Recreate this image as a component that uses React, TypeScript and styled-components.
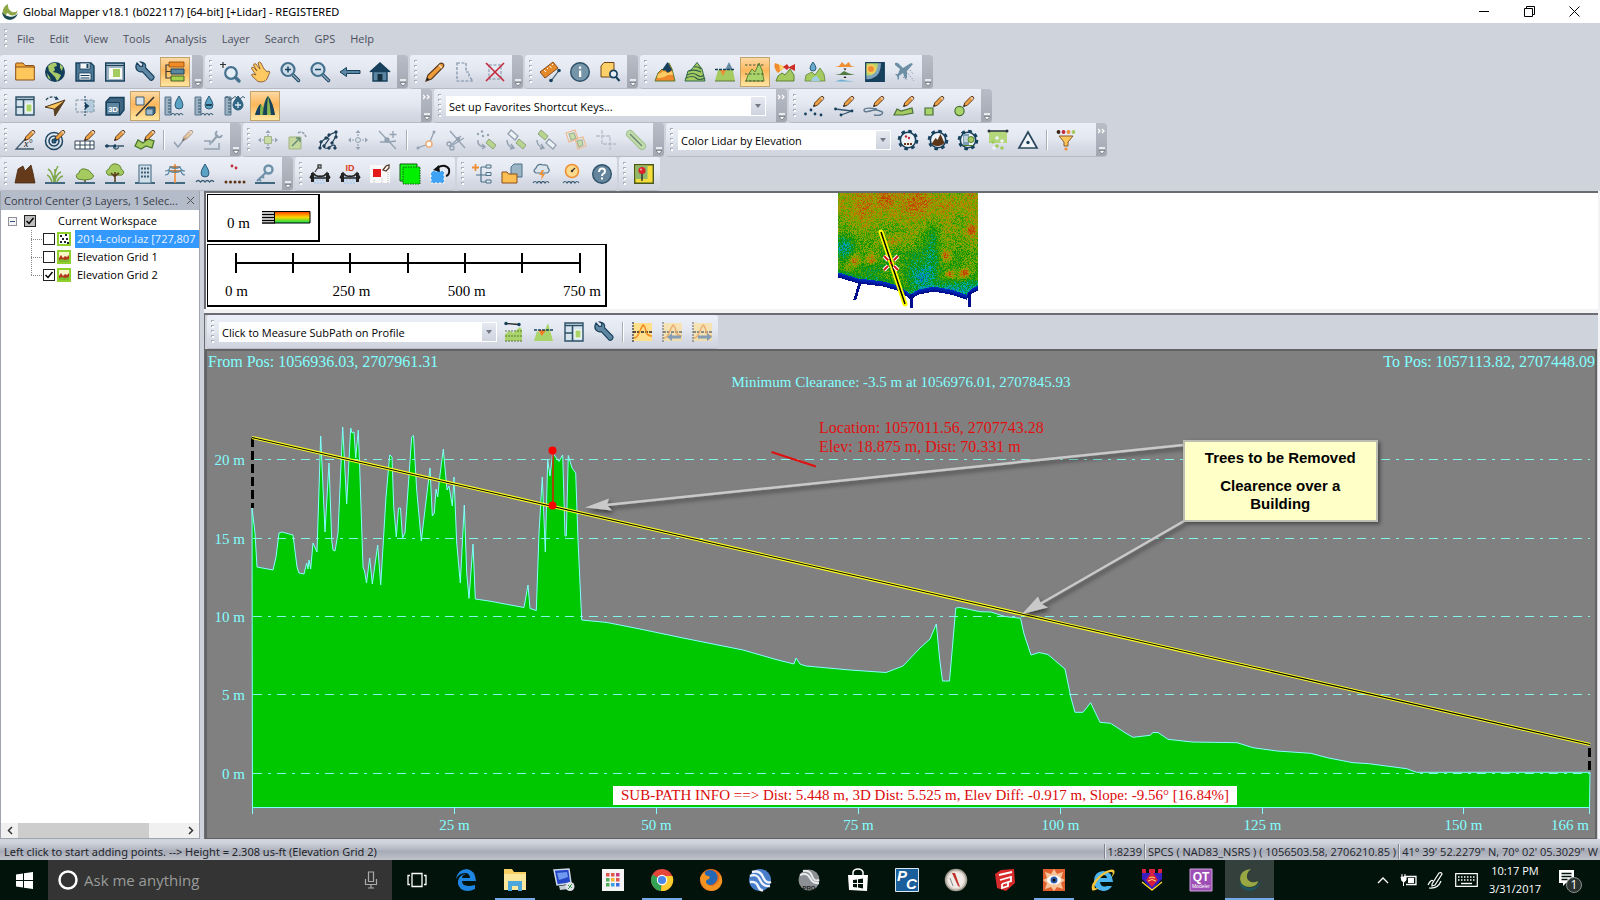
import React, { ReactNode, useEffect, useRef } from "react";
import styled, { createGlobalStyle, css } from "styled-components";

const UI = '"Open Sans", "Noto Sans", sans-serif';
const UI_WIDE = '"Noto Sans", "Open Sans", sans-serif';
const SERIF = '"Liberation Serif", serif';

const NAVY = "#16405c";
const ORANGE = "#ef8f35";
const GREEN = "#a5ca5f";
const LIME = "#a9d46a";
const FADED = "#93a1b0";

const GlobalStyle = createGlobalStyle`
  *, *::before, *::after { box-sizing: border-box; }
  body { margin: 0; background: #cfd3dc; font-family: ${UI}; font-size: 11px; color: #111; }
  button, select, input { font: inherit; color: inherit; }
`;

/* ---------- icon drawings, on a 20 x 20 grid ---------- */

const Pencil = ({ faded }: { faded?: boolean }) => (
  <g opacity={faded ? 0.45 : 1}>
    <path d="M9.5 10.5L10.8 6.8L16.5 1Q18-.4 19.3.9Q20.5 2.2 19.1 3.5L13.3 9.3Z" fill="#efa040" stroke="#5a3a20" strokeWidth="1" />
    <path d="M9.5 10.5l.6-1.9 1.4 1.3z" fill="#222" />
    <path d="M17 1.2l2 2" stroke="#e9d3c4" strokeWidth="1.6" />
  </g>
);

const Gear = ({ children }: { children: ReactNode }) => (
  <g>
    <circle cx="10" cy="10" r="9" fill="none" stroke={NAVY} strokeWidth="2.6" strokeDasharray="3.6 3.468" />
    <circle cx="10" cy="10" r="7.7" fill="#eef1f6" stroke={NAVY} strokeWidth="1.6" />
    {children}
  </g>
);

const Wrench = (
  <path
    d="M2 1l3.2 3.4 2.3-.3.4-2.5L5.6 0C9 0 11.5 2.4 10.7 6l8 8.2c1.5 1.8-1.8 5-3.7 3.7l-7.7-8.3C4 10.7.2 8 1 3.5z"
    fill="#5f87a3" stroke={NAVY} strokeWidth="1.2"
  />
);

const Ruler = (
  <g>
    <path d="M0 1h6v18H0z" fill="#9bb1c1" stroke="#54758c" strokeWidth="1" />
    <path d="M3 4h3M3 7h3M3 10h3M3 13h3M3 16h3" stroke="#2f546c" strokeWidth="1" />
  </g>
);

const Waves = ({ x = 4 }: { x?: number }) => (
  <path d={`M${x} 19q2-3 4 0q2-3 4 0q2-3 4 0`} fill="none" stroke="#3a5d74" strokeWidth="1.2" />
);

const Baseline = <path d="M0 19h20" stroke="#315c74" strokeWidth="1.8" />;

const FourArrows = ({ children }: { children?: ReactNode }) => (
  <g stroke={FADED} fill={FADED}>
    <path d="M10 1v5M10 14v5M1 10h5M14 10h5" strokeWidth="1.2" strokeDasharray="2 1" />
    <path d="M10 0l2.5 3h-5zM10 20l2.500-3h-5zM0 10l3-2.5v5zM20 10l-3-2.5v5z" stroke="none" />
    {children}
  </g>
);

const bridge = (
  <g>
    <path d="M4 13h12M3 16h14M4 19h12" stroke="#a9cdf0" strokeWidth="1.6" strokeDasharray="2 1" />
    <path d="M1 9h3v9H1zM16 9h3v9h-3z" fill="#222" />
    <path d="M0 14l3-5q3 4 7 3 4 1 7-3l3 5M0 14h20" fill="none" stroke="#222" strokeWidth="1.6" />
  </g>
);

const profileTile = (
  <g>
    <path d="M1 1h19v18H1z" fill="#ffdf8c" />
    <path d="M1 0v20" stroke="#333" strokeWidth="1.2" strokeDasharray="2 1" />
    <path d="M1 10h19" stroke="#222" strokeWidth="1.4" strokeDasharray="3 1" />
    <path d="M2 16q3 0 5-5t4-8q2 1 3 6t6 5" fill="none" stroke="#f28a1c" strokeWidth="1.4" />
  </g>
);

const magnifier = (
  <g>
    <path d="M12 12l6.5 6.5" stroke={NAVY} strokeWidth="3.4" strokeLinecap="round" />
    <path d="M12.5 12.5l6 6" stroke="#8ca9bd" strokeWidth="1.6" strokeLinecap="round" />
    <circle cx="8" cy="7.5" r="6.5" fill="#cfdeea" stroke="#46728f" strokeWidth="2.2" />
    <path d="M5 7.5h6" stroke={NAVY} strokeWidth="1.5" />
  </g>
);

const icons: Record<string, ReactNode> = {
  folder: (
    <g>
      <path d="M.7 6V1.600Q.7 1 2 1h6l2 2.500h8.500q.8 0 .8 1V6z" fill="#f4a93c" stroke="#8a4e16" />
      <path d="M.7 5h18.600v13H.7z" fill="#fdc75c" stroke="#8a4e16" />
    </g>
  ),
  globe: (
    <g>
      <circle cx="10" cy="10" r="10" fill="#123e5b" />
      <path d="M3 4q4-4 8-3l1 3-3 1 1 3-2 2 4 1 4 2-2 4-2 2-2-4-2-2-4-4z" fill="#a9ca68" />
      <path d="M15 2l3 3-1 4-2-3zM2 11l2 3 2 4-3-2z" fill="#a9ca68" />
    </g>
  ),
  save: (
    <g>
      <path d="M1 1h15l3 3v15H1z" fill="#4c7896" stroke={NAVY} strokeWidth="1.4" />
      <path d="M5 1h10v6H5zM4 11h12v7H4z" fill="#f3f7fa" stroke={NAVY} strokeWidth=".8" />
      <path d="M11.5 2h2v4h-2zM5.500 13h9v1h-9zM5.500 15.500h9v1h-9z" fill={NAVY} />
    </g>
  ),
  layout: (
    <g>
      <path d="M.7 1h18.6v18H.7z" fill="#9fb3c2" stroke={NAVY} strokeWidth="1.4" />
      <path d="M1 3.5h18" stroke={NAVY} />
      <path d="M4 6h13v11H4z" fill="#f7f9f2" />
      <path d="M8 7h7v8H8z" fill={GREEN} />
    </g>
  ),
  wrench: Wrench,
  layers: (
    <g>
      <path d="M4 0h15v5H4z" fill="#f08a24" stroke="#8b4c13" strokeWidth=".8" />
      <path d="M6 7h13v5H6z" fill="#5c87a1" stroke={NAVY} />
      <path d="M6 14h13v5H6z" fill="#a6d24c" stroke="#45622a" />
      <path d="M4 3H1v13h5M1 9.5h5" fill="none" stroke="#3d3d30" strokeWidth="1.2" />
    </g>
  ),
  zoomTool: (
    <g>
      <path d="M0 2.5h6M3 0v6" stroke="#333" strokeWidth="1.2" />
      <path d="M15 15l4 4" stroke="#46728f" strokeWidth="3.4" strokeLinecap="round" />
      <circle cx="11" cy="11" r="5.8" fill="#e6eef5" stroke="#46728f" strokeWidth="2.2" />
    </g>
  ),
  hand: (
    <path d="M8 19.500L2 14q-1-2 1-2l3 1L1.500 6.500q0-2 2-1.200L7 9 3.500 3q.5-2 2.500-1l4 5L8 1q1.500-2 3 0l3 6q2 1 3 3l2-1q1.500 1 0 3l-2 5q-3 4-9 2.500z" fill="#fdc961" stroke="#8a5a2a" strokeWidth=".9" />
  ),
  zoomIn: (<g>{magnifier}<path d="M8 4.5v6" stroke={NAVY} strokeWidth="1.5" /></g>),
  zoomOut: magnifier,
  back: <path d="M0 10l6.5-4.500v3H20v3H6.5v3z" fill="#5b86a2" stroke={NAVY} strokeWidth="1" />,
  home: (
    <g>
      <path d="M3 9.500h14V19H3z" fill="#5b86a2" stroke={NAVY} strokeWidth="1.4" />
      <path d="M0 10L10 1l10 9" fill={NAVY} stroke={NAVY} strokeWidth="1.6" />
      <path d="M7.5 12h5v7h-5z" fill="#16303f" />
    </g>
  ),
  pencil: (
    <g>
      <path d="M1 19L3 13 15 1.500q1.500-1 3 .3t.4 3L6.500 17z" fill="#ee9b3a" stroke="#5a3a20" strokeWidth="1.2" />
      <path d="M1 19l1.200-3.600 2.500 2.200z" fill="#222" />
      <path d="M14 3l3 3" stroke="#f8e0c4" strokeWidth="1.5" />
    </g>
  ),
  selectShape: <path d="M2 1h9v9h3v4l4 5H2z" fill="none" stroke="#7b8ea6" strokeWidth="1.2" strokeDasharray="3 1.500" />,
  deleteShape: (
    <g>
      <path d="M4 3h12v14H4z" fill="none" stroke="#7f8fa2" strokeDasharray="3 1.500" />
      <path d="M1 1l18 18M19 1L1 19" stroke="#c4283a" strokeWidth="1.6" />
    </g>
  ),
  measure: (
    <g>
      <path d="M0 10L13 0l5 6L5 16z" fill="#e58a2b" stroke="#8a4b17" />
      <path d="M4 8l2 2M7 6l1 1M9.500 4l2 2M12 2l1 1" stroke="#fff" />
      <path d="M11 19L19 8.500" stroke="#35566c" strokeWidth="1.2" />
      <circle cx="11" cy="18.500" r="1.800" fill={NAVY} /><circle cx="19" cy="8.500" r="1.800" fill={NAVY} />
    </g>
  ),
  info: (
    <g>
      <circle cx="10" cy="10" r="9.3" fill="#7795a9" stroke="#2d526a" strokeWidth="1.4" />
      <path d="M9 8.500h2.200V15H9zM9 4.500h2.200v2.200H9z" fill="#fff" />
    </g>
  ),
  searchDoc: (
    <g>
      <path d="M1 15V4l3-3.500h10V15z" fill="#fdd069" stroke="#6e4618" />
      <circle cx="13.5" cy="12" r="3.6" fill="#e7eef4" stroke={NAVY} strokeWidth="1.7" />
      <path d="M16 15l3.500 4" stroke={NAVY} strokeWidth="2" />
    </g>
  ),
  shaderHill: (
    <g>
      <path d="M0 19L3 11l4-4 2 2 5-8 3 6 3 12z" fill="#f0892b" stroke="#5b7a2c" />
      <path d="M7 8l5.500-8L17 8l-4 3-3-3z" fill={NAVY} />
      <path d="M3 12q4-1 5-3l5 2 4-2 1 4q-4-1-7 1t-9 2z" fill="#fccb62" />
    </g>
  ),
  contourHill: (
    <g>
      <path d="M0 19L3 9l3-1 6-7.500L17 7l3 12z" fill={GREEN} stroke="#2f6a4c" />
      <path d="M4 9q6-2 12 1M2 13q6-3 10 0t7 0M1 16q7-3 10 0t9 0M9 5q4-1 7 2" stroke="#2c5e4d" fill="none" strokeWidth="1.2" />
    </g>
  ),
  cutHill: (
    <g>
      <path d="M0 19L3 8h15l2 11z" fill={GREEN} />
      <path d="M10 8l4-8 4 8z" fill="#668ba2" />
      <path d="M5 8l3 6 3-6z" fill={ORANGE} />
      <path d="M0 7.500h20" stroke={NAVY} strokeWidth="1.5" strokeDasharray="3 1" />
      <path d="M0 19h20" stroke="#5d7b3b" />
    </g>
  ),
  lineOfSight: (
    <g>
      <path d="M1 19L3 13l4-6 3 3 4-9 3 7 2 11z" fill={LIME} stroke="#5f8535" />
      <path d="M0 3h20M0 12h20M0 19h20" stroke="#4a5a38" strokeDasharray="2.500 1.500" />
    </g>
  ),
  viewShed: (
    <g>
      <path d="M1 19L3 14l4-3 3 2 5-6 4 6v6z" fill={GREEN} stroke="#5f8535" />
      <path d="M0 1l10 4-7 6Q-2 6 0 1z" fill="#f28b2c" />
      <path d="M4 2.500l6 2.500-5 4z" fill="#fcd06a" />
      <path d="M8 5l4-3 2 3 6-3v7l-6-3-2 2z" fill="#cf2f2a" />
    </g>
  ),
  watershed: (
    <g>
      <path d="M0 19L1 13l6-3 3 3 5-7 4 6 1 7z" fill={GREEN} stroke="#5f8535" strokeWidth=".8" />
      <path d="M8 0q3 4 3 6a3 3 0 01-6 0q0-2 3-6z" fill="#67a9cf" stroke="#2f5d7a" />
      <path d="M6 19q2-5 6-5l3 5z" fill="#9fd0e8" />
    </g>
  ),
  compareTerrain: (
    <g>
      <path d="M0 5l4-1 3-4 3 3 4-3 2 4 4 1z" fill={ORANGE} />
      <path d="M0 13l5-1 4-3 4 2 3 1 4 1z" fill="#4f7a43" />
      <path d="M0 19.500l6-2 5 1 9 1z" fill="#68aecf" />
      <path d="M8.500 6.500h3L10 8.500zM8.500 16h3L10 14z" fill="#222" />
    </g>
  ),
  heatmap: (
    <g>
      <path d="M.7.7h18.6v18.6H.7z" fill={NAVY} />
      <path d="M1 1h15q0 12-8 15-4 2-7 1z" fill="#7fa3bd" />
      <path d="M1 1h12q0 9-6 12-3 1-6 0z" fill="#b6d36e" />
      <circle cx="6" cy="7" r="4.800" fill="#f7d05f" />
      <circle cx="6" cy="7" r="3" fill={ORANGE} />
      <path d="M.7.7h18.6v18.6H.7z" fill="none" stroke={NAVY} strokeWidth="1.2" />
    </g>
  ),
  plane: (
    <g>
      <path d="M0 1q2-1 4 1l4 4 8-5 2 1-6 7 0 7-2 1-2-6-4 3 0 3-1 1-1-4-2-2 3 0 2-5-5-4z" fill="#6d8fa6" />
      <path d="M11 9l8 10M15 8l3 4M8 15l4 3" stroke="#8798a8" strokeDasharray="1.500 1.500" />
    </g>
  ),
  panes: (
    <g>
      <path d="M1 1h18v18H1z" fill="#d7e4ee" stroke="#2d5067" strokeWidth="1.4" />
      <path d="M1 3.500h18M8.500 3v16M1 11h8" stroke="#2d5067" strokeWidth="1.6" />
      <path d="M11 8h6v8h-6z" fill={LIME} stroke="#fff" />
    </g>
  ),
  flyThrough: (
    <g>
      <path d="M1 4q4-5 11-2" fill="none" stroke="#28485e" strokeWidth="1.3" strokeDasharray="3 1.500" />
      <path d="M11 0l3 3.500-4 .5z" fill={NAVY} />
      <path d="M0 11L20 4 10 20 9 13z" fill="#fbc65a" stroke="#4c3620" />
      <path d="M9 13L20 4 10 20z" fill="#5b4022" />
    </g>
  ),
  clipPane: (
    <g>
      <path d="M10 4h9v12h-9z" fill="#b4ccdc" />
      <path d="M1 4h18v12H1z" fill="none" stroke="#7c93a5" strokeDasharray="3 1.500" />
      <path d="M10 0v20" stroke={NAVY} strokeDasharray="2 1" />
      <path d="M10 6.500l4.500 3.500-4.500 3.500z" fill={NAVY} />
    </g>
  ),
  cube3d: (
    <g>
      <path d="M1 6l4-4.500h14V14l-4 5H1z" fill="#3f6580" stroke={NAVY} strokeWidth="1.4" />
      <path d="M1.500 6.500h13v12h-13z" fill="#5f86a0" stroke={NAVY} />
      <text x="8" y="16" textAnchor="middle" fontFamily="Liberation Sans" fontWeight="700" fontSize="8" fill="#fff">3D</text>
    </g>
  ),
  toggle3d: (
    <g>
      <path d="M1 1h8v8H1z" fill="#d5e2ec" stroke="#475c6c" />
      <path d="M1 20L19 1" stroke="#333" strokeWidth="1.5" />
      <path d="M11 13l2-2h7v6l-2 2h-7z" fill="#3e6680" stroke={NAVY} /><path d="M11.500 13.500h6v5h-6z" fill="#9cb9cc" />
    </g>
  ),
  waterUp: (<g>{Ruler}<path d="M14 0q4 6 4 9a4 4 0 01-8 0q0-3 4-9z" fill="#5ba3c4" stroke="#2d5b77" /><Waves x={6} /></g>),
  waterDown: (
    <g>{Ruler}<path d="M14 0q4 6 4 9a4 4 0 01-8 0q0-3 4-9z" fill="#5ba3c4" stroke="#2d5b77" /><path d="M11 9h6" stroke="#12303f" strokeWidth="1.6" /><Waves x={6} /></g>
  ),
  waterTop: (
    <g>{Ruler}<path d="M13 0q5 6 5 9a5 5 0 01-10 0q0-3 5-9z" fill="#2f6686" stroke="#2d5b77" /><path d="M10 9h6M13 6v6" stroke="#d8e8f2" strokeWidth="1.3" /><path d="M0 2q2-3 4 0t4 0 4 0 4 0 4 0" fill="none" stroke="#3a5d74" /></g>
  ),
  peaks: (
    <g>
      <path d="M0 19Q3 9 6 8l2 4q2-10 5-12 4 6 7 19z" fill="#5f9a4a" />
      <path d="M0 19Q3 9 6 8q-1 5-1 11zM8 19q1-14 5-19-1 10 0 19z" fill={NAVY} />
      <path d="M15 19q0-12-2-19 5 6 7 19z" fill={NAVY} />
      <path d="M5 19q0-7 1-11l2 5-1 6zM12 19q0-10 1-18 2 8 3 18z" fill="#86b552" />
    </g>
  ),
  cogoAngle: (<g><path d="M19 19H1L13 6" fill="none" stroke="#42596b" strokeWidth="1.3" /><text x="9" y="17" fontFamily="Liberation Serif" fontStyle="italic" fontSize="10" fill="#222">x°</text><Pencil /></g>),
  target: (
    <g fill="none" stroke="#1c4560" strokeWidth="1.5">
      <circle cx="9" cy="11" r="8.500" /><circle cx="9" cy="11" r="5" /><circle cx="9" cy="11" r="1.800" fill="#5b8aa5" /><Pencil />
    </g>
  ),
  gridPencil: (<g><path d="M0 11h19v8H0zM0 15h19M5 11v8M10 11v8M15 11v8" fill="#fff" stroke="#35495a" /><Pencil /></g>),
  linePencil: (<g><path d="M0 16h9q-1 3 2 3 3 0 2-3h6" fill="none" stroke="#35566c" strokeWidth="1.3" /><circle cx="2" cy="16" r="1.700" fill={NAVY} /><circle cx="10" cy="16" r="1.700" fill={NAVY} /><Pencil /></g>),
  mapPencil: (<g><path d="M0 16l3-6 5 3 5-4 6 2-2 7-6-2-5 3z" fill={GREEN} stroke="#48762f" strokeWidth="1.3" /><Pencil /></g>),
  checkPencil: (<g><path d="M1 12l4 5 8-10" fill="none" stroke={FADED} strokeWidth="1.5" /><Pencil faded /></g>),
  editTool: (<g fill="none" stroke={FADED} strokeWidth="1.5"><path d="M1 11h6v4M1 19h15v-6" /><path d="M8 13l7-8M14 1q-3 4 1 6 3 1 4-2" strokeWidth="2" /></g>),
  moveShape: <FourArrows><path d="M6.500 6.500h7v7h-7z" fill="#c9dea4" stroke="#a5b48f" /></FourArrows>,
  scaleShape: (<g><path d="M1 7h12v12H1z" fill="#c5d89f" stroke="#a3b583" /><path d="M4 16l8-8M12 8H8M12 8v4" stroke="#5f8a76" strokeWidth="1.4" /><path d="M10 3q5-3 8 4" fill="none" stroke={FADED} strokeWidth="1.5" strokeDasharray="3 1" /></g>),
  vertices: (
    <g fill="#1d3f57" stroke="#1d3f57">
      <path d="M2 18l1-6 5-4 3 1-5 7q0 3 4 2l5-3q4 0 1 3M9 9l2-4 7-3 0 4-4 7" fill="none" strokeWidth="1.2" />
      {[[2, 18], [3, 12], [8, 8], [6, 16], [11, 5], [18, 2], [18, 7], [14, 13], [17, 18], [11, 18]].map(([x, y]) => <circle key={`${x}-${y}`} cx={x} cy={y} r="1.200" />)}
    </g>
  ),
  moveVertex: <FourArrows><circle cx="10" cy="10" r="2.500" fill="#d9e2ea" /></FourArrows>,
  addVertex: (<g stroke={FADED} strokeWidth="1.3"><path d="M1 1l17 18M2 12h8l8-1M15 1v7M11.500 4.500h7" fill="none" /><circle cx="9" cy="10" r="2" fill={FADED} /></g>),
  joinLine: (<g><path d="M1 18l12-4 5-12" fill="none" stroke={FADED} strokeWidth="1.3" /><circle cx="2" cy="18" r="1.500" fill={FADED} /><circle cx="18" cy="2" r="1.500" fill={FADED} /><circle cx="13" cy="14" r="3" fill="#fff" stroke="#f0ae79" strokeWidth="1.5" /></g>),
  scissors: (<g stroke={FADED} fill="none" strokeWidth="1.3"><path d="M4 1l15 17M5 15l10-9M7 15L18 8" /><circle cx="3" cy="14" r="2" /><circle cx="6" cy="18" r="2" /><circle cx="12" cy="9" r="1.500" fill={FADED} /></g>),
  dotsToShape: (<g><circle cx="2" cy="4" r="1.200" fill={FADED} /><circle cx="6" cy="1.500" r="1.200" fill={FADED} /><circle cx="7" cy="6" r="1.200" fill={FADED} /><circle cx="12" cy="5" r="1.200" fill={FADED} /><path d="M10 13l3-4 7 6-3 4z" fill="#b9d48f" stroke="#8ea47a" /><path d="M2 10q-1 6 6 7M6 14l3 3-3 2" fill="none" stroke={FADED} strokeWidth="1.4" /></g>),
  copyShape: (<g><path d="M2 4l3-4 7 6-3 4z" fill="#eef3f7" stroke={FADED} strokeWidth="1.3" /><path d="M10 13l3-4 7 6-3 4z" fill="#b9d48f" stroke="#8ea47a" /><path d="M1 10q0 6 6 8M5 14l3 4-4 1" fill="none" stroke={FADED} strokeWidth="1.4" /></g>),
  pasteShape: (<g><path d="M2 4l3-4 7 6-3 4z" fill="#b9d48f" stroke="#8ea47a" /><path d="M10 13l3-4 7 6-3 4z" fill="#eef3f7" stroke={FADED} strokeWidth="1.3" /><path d="M1 10q0 6 6 8M5 14l3 4-4 1" fill="none" stroke={FADED} strokeWidth="1.4" /></g>),
  alignShapes: (<g strokeWidth="1.1"><path d="M0 3l9-3 3 9-9 3zM9 9l8-2 3 9-8 3z" fill="none" stroke="#f0b98d" /><path d="M3 4l5-1 2 5-5 2zM11 11l5-1 1 5-4 2z" fill="#c8dcae" stroke="#9db38c" /></g>),
  crop: <path d="M6 0v14h14M0 6h14v14" fill="none" stroke="#b5bfcb" strokeWidth="1.3" strokeDasharray="4 1" />,
  buffer: (<g><path d="M4 4l12 12" stroke="#9fc08a" strokeWidth="8" strokeLinecap="round" /><path d="M4 4l12 12" stroke="#c3dcae" strokeWidth="6" strokeLinecap="round" /><path d="M4 4l12 12" stroke="#6f8a72" strokeWidth="1.5" /></g>),
  points: (<g fill={NAVY}><circle cx="1.500" cy="18" r="1.400" /><circle cx="7" cy="14" r="1.400" /><circle cx="11" cy="18" r="1.400" /><circle cx="17" cy="19" r="1.400" /><Pencil /></g>),
  polyline: (<g fill={NAVY}><path d="M1 13l17 2L7 19" fill="none" stroke="#35566c" strokeWidth="1.3" /><circle cx="1.500" cy="13" r="1.400" /><circle cx="18" cy="15" r="1.400" /><circle cx="7" cy="19" r="1.400" /><Pencil /></g>),
  freehand: (<g><path d="M13 13q-12-2-13 1 0 3 6 1t10 0q4 1 2 3t-8 1" fill="none" stroke="#5d7a90" strokeWidth="1.4" /><Pencil /></g>),
  polygon: (<g><path d="M0 19l3-6 4 2 11-3 1 5-10 2z" fill={GREEN} stroke="#466f3a" strokeWidth="1.2" /><Pencil /></g>),
  rect: (<g><path d="M1 12h8v7H1z" fill={LIME} stroke="#466f3a" strokeWidth="1.2" /><Pencil /></g>),
  circle: (<g><circle cx="5.500" cy="15" r="4.600" fill={LIME} stroke="#466f3a" strokeWidth="1.2" /><Pencil /></g>),
  lidarPoints: <Gear><circle cx="8" cy="6.500" r="1.200" fill="#c4283a" /><circle cx="11" cy="8" r="1.200" fill="#c4283a" /><path d="M6 14h9" stroke="#6b3415" strokeWidth="2" strokeDasharray="2 1" /></Gear>,
  lidarGround: <Gear><path d="M3.500 14l4-6 2 2 3-6 4 9q-5 6-13 1z" fill="#5b3518" /></Gear>,
  lidarBuild: <Gear><path d="M5 4h6v11H5z" fill="#7ea1b8" /><path d="M6 7h4M6 9h4M6 11h4" stroke="#fff" /><circle cx="13" cy="9.500" r="3" fill={GREEN} stroke="#5f8535" /><path d="M5 15.500h10" stroke="#4b7a2e" /></Gear>,
  lidarExtract: (<g><path d="M1 1h18v12H1z" fill="#b4d77c" /><path d="M0 1h20" stroke="#27333d" strokeWidth="1.5" /><circle cx="1" cy="1" r="1.500" fill="#27333d" /><circle cx="19" cy="1" r="1.500" fill="#27333d" />{[[5, 12], [9, 8], [9, 16], [14, 11], [14, 18], [6, 18]].map(([x, y], i) => <circle key={i} cx={x} cy={y} r="1.800" fill={i % 2 ? "#eef3f7" : "#9ccb57"} />)}</g>),
  lidarTriangle: (<g><path d="M10 2l9 16H1z" fill="#f2f5f8" stroke="#28485e" strokeWidth="1.7" /><circle cx="10" cy="12.500" r="1.700" fill={NAVY} /></g>),
  filter: (<g>{["#3a2418", "#c4283a", ORANGE, GREEN].map((c, i) => <circle key={c} cx={2.500 + i * 5} cy="2" r="1.900" fill={c} />)}<path d="M3 6h14l-5 6v4H8v-4z" fill="#fbc65a" stroke="#8a5a2a" /><circle cx="10" cy="19" r="1.600" fill={ORANGE} /></g>),
  mountain: <path d="M0 19L3 5l5-3 2 5 6-6 2 8 2 10z" fill="#643a1b" stroke="#472811" strokeWidth=".8" />,
  grass: (<g>{Baseline}<path d="M9 18Q8 8 3 5M9 18q0-9 4-16M10 18q1-8 6-10M7 18Q5 12 2 11M12 18q2-5 6-6M10 18V5" fill="none" stroke="#7da849" strokeWidth="1.5" /></g>),
  bush: (<g>{Baseline}<path d="M10 18v-6" stroke="#5d3d1e" strokeWidth="1.5" /><path d="M3 15q-4-4 1-6 1-5 6-4t6 4q5 3 0 6-7 2-13 0z" fill={GREEN} stroke="#5f8535" /></g>),
  tree: (<g>{Baseline}<path d="M3 11q-4-4 1-6 2-6 7-5t5 5q5 3 1 6-4 1-7-1-4 2-7 1z" fill={GREEN} stroke="#5f8535" /><path d="M10 18V8M10 13L6 9M10 12l4-3" stroke="#5d3d1e" strokeWidth="1.6" /></g>),
  building: (<g>{Baseline}<path d="M4 1h12v18H4z" fill="#cfdfe9" stroke="#55798f" strokeWidth="1.2" /><path d="M7 3.500v11M10 3.500v11M13 3.500v11" stroke="#2d5067" strokeWidth="1.8" strokeDasharray="2 2" /></g>),
  powerline: (<g>{Baseline}<path d="M10 0v19" stroke={ORANGE} strokeWidth="1.6" /><path d="M5 3h10M4 7h12" stroke="#a9682b" strokeWidth="1.3" /><path d="M0 7q5 0 5-4 5 3 10 0 1 4 5 4M0 11q4 0 4-4 6 3 12 0 1 4 4 4" fill="none" stroke="#5a88a4" strokeWidth="1.2" /></g>),
  water: (<g><path d="M10 0q4 6 4 9a4 4 0 01-8 0q0-3 4-9z" fill="#5ba3c4" stroke="#2d5b77" /><path d="M1 18q2-3 4.500 0 2.500-3 4.500 0 2.500-3 4.500 0 2.500-3 4.500 0" fill="none" stroke="#3a5d74" strokeWidth="1.3" /></g>),
  noise: (<g><circle cx="7" cy="2" r="1.400" fill="#c4283a" /><circle cx="11" cy="4" r="1.400" fill="#c4283a" />{[1, 5.500, 10, 14.500, 19].map((x) => <circle key={x} cx={x} cy="18" r="1.500" fill="#5d3416" />)}</g>),
  key: (<g>{Baseline}<circle cx="13.500" cy="5.500" r="4" fill="#dfe9f2" stroke="#6d90a8" strokeWidth="2.4" /><path d="M11 8.500L2 17M4 15l2 2M7 12l2 2" stroke="#6d90a8" strokeWidth="2" /></g>),
  bridgeTool: (<g>{bridge}<path d="M5 8l4-6M8 1l3 0 0 3-3 0z" fill="none" stroke="#444" strokeWidth="1.3" /></g>),
  bridgeId: (<g>{bridge}<text x="10" y="7" textAnchor="middle" fontFamily="Liberation Sans" fontWeight="700" fontSize="9" fill="#e03a1c">ID</text></g>),
  redSquare: (<g><path d="M0 1h20v18H0z" fill="#f8f8f8" /><path d="M3 5h8v8H3z" fill="#e31b1b" /><path d="M13 6l3-4 3-1 0 3-3 3z" fill="none" stroke="#5a3a2b" strokeWidth="1.3" /><path d="M4 16v3M12 14v5M18 8v11" stroke="#bbb" strokeDasharray="1 1" /></g>),
  greenSquare: (<g><path d="M0 0h17v17H0z" fill="#15ff15" stroke="#0a5a0a" /><path d="M3 3h17v17H3z" fill="#00f000" stroke="#0a5a0a" strokeDasharray="1.500 1" /></g>),
  undo: (<g><path d="M1 7h13v12H1z" fill="#3fa3f5" stroke="#fff" strokeDasharray="2 2" /><path d="M7 4q8-5 12 1 1 6-3 7" fill="none" stroke="#111" strokeWidth="2" /><path d="M3 6l6-5 1 7z" fill="#111" /></g>),
  hierarchy: (<g><path d="M3.500 0v7M0 3.500h7" stroke={ORANGE} strokeWidth="1.8" /><path d="M4 11h5M9 3v15M9 3h5M9 11h5M9 18h5" fill="none" stroke="#4f7188" strokeWidth="1.2" />{[2, 9.500, 17].map((y) => <path key={y} d={`M14 ${y - 1}h5v3h-5z`} fill="#dbe6ef" stroke="#4f7188" />)}</g>),
  folderDoc: (<g><path d="M9 3l3-3h8v13H9z" fill="#9bb4c6" stroke="#4f7188" /><path d="M0 8h5l1.500 2H15v9H0z" fill="#fbbf55" stroke="#8a4e16" /></g>),
  storm: (<g><path d="M4 9q-4-2 0-5 2-5 7-3 5-1 5 3 3 3-1 5z" fill="#dbe4ec" stroke="#55758b" strokeWidth="1.2" /><path d="M10 6l-3 5h3l-1 5 4-6h-3l2-4z" fill={ORANGE} /><Waves x={1} /><Waves x={5} /></g>),
  gauge: (<g><circle cx="10" cy="7" r="6.500" fill="#fddb8c" stroke="#ee9137" strokeWidth="1.6" /><path d="M10 7l3-3" stroke="#333" strokeWidth="1.3" /><circle cx="10" cy="7" r="1.200" fill="#333" /><Waves x={1} /><Waves x={5} /></g>),
  help: (<g><circle cx="10" cy="10" r="9.300" fill="#64859b" stroke="#2d526a" strokeWidth="1.4" /><path d="M7 8q0-3.500 3-3.500T13 7.500q0 1.500-2 2.500-1 .6-1 2" fill="none" stroke="#fff" strokeWidth="1.9" /><path d="M9 13.500h2v2H9z" fill="#fff" /></g>),
  mapPin: (<g><path d="M.7.7h18.6v18.6H.7z" fill="#f5dd3c" stroke="#4a5a1c" strokeWidth="1.4" /><path d="M1.500 1.500h12V15h-12z" fill="#8fb86c" /><path d="M8 8v9" stroke="#222" strokeWidth="1.3" /><circle cx="8" cy="6.500" r="3.600" fill="#d8242a" /><circle cx="7" cy="5.500" r="1" fill="#f7b3b3" /></g>),
  measurePath: (<g><path d="M1 19V12l5-3 3 2 7-6 2 3v11z" fill={LIME} /><path d="M1 9h18M1 14h18M1 19h18" stroke="#5f7340" strokeDasharray="2 1" /><path d="M2 1.500l13 1" stroke="#222" strokeWidth="1.3" /><circle cx="2" cy="1.500" r="1.700" fill={NAVY} /><circle cx="15" cy="2.500" r="1.700" fill={NAVY} /></g>),
  cutFill: (<g><path d="M0 19L3 9l6 4 5-12 5 18z" fill={LIME} /><path d="M4 8l4 6 4-6z" fill="#f07d21" /><path d="M0 8h20" stroke={NAVY} strokeWidth="1.5" strokeDasharray="3 1" /></g>),
  profile: profileTile,
  profilePrev: (<g opacity=".6">{profileTile}<path d="M5 15l5-4v2.500h9v3h-9V19z" fill="#4f7391" /></g>),
  profileNext: (<g opacity=".6">{profileTile}<path d="M20 15l-5-4v2.500H6v3h9V19z" fill="#4f7391" /></g>),
};

/* ---------- styled parts ---------- */

const Page = styled.div`
  display: flex;
  flex-direction: column;
  min-height: 100vh;
  background: #cfd3dc;
`;

const TitleBar = styled.header`
  display: flex;
  align-items: center;
  height: 23px;
  padding: 0 3px 0 2px;
  background: #fff;
`;
const Title = styled.h1`
  flex: 1;
  margin: 0 0 0 5px;
  font-family: ${UI_WIDE};
  font-size: 11px;
  font-weight: 400;
  color: #000;
`;
const WindowButton = styled.button`
  display: grid;
  place-items: center;
  width: 45px;
  height: 21px;
  padding: 0;
  border: 0;
  background: none;
`;

const gripDots = css`
  content: "";
  width: 3px;
  background: radial-gradient(circle at 1px 1px, #fff 0 1px, transparent 1px) 1px 1px / 3px 5px,
    repeating-linear-gradient(#a9afbb 0 2px, transparent 2px 5px);
`;

const MenuBar = styled.nav`
  display: flex;
  align-items: center;
  height: 32px;
  padding: 0 0 2px 4px;
  gap: 5px;
  &::before { ${gripDots} height: 18px; }
`;
const MenuItem = styled.button`
  padding: 0 5px;
  border: 0;
  background: none;
  color: #4b505c;
`;

const ToolbarRows = styled.div`
  display: grid;
  grid-auto-rows: 34px;
  align-items: start;
`;
const ToolbarRow = styled.div`
  display: flex;
  gap: 2px;
  height: 34px;
`;
const Bar = styled.div<{ $width?: number }>`
  display: flex;
  align-items: center;
  height: 34px;
  width: ${(p) => (p.$width ? `${p.$width}px` : "auto")};
  padding-left: 4px;
  border-radius: 3px;
  background: linear-gradient(#eceff7, #e4e8f1 45%, #d6dae5 75%, #d0d4df);
  border-bottom: 1px solid #b7bbc6;
  &::before { ${gripDots} height: 23px; margin-right: 3px; flex: none; }
`;
const Tool = styled.button<{ $active?: boolean }>`
  display: grid;
  place-items: center;
  flex: none;
  width: 30px;
  height: 30px;
  padding: 0;
  border: 1px solid ${(p) => (p.$active ? "#c3a36c" : "transparent")};
  background: ${(p) => (p.$active ? "linear-gradient(#fbd9a2, #fdb75c 45%, #ffe6a0)" : "none")};
  svg { display: block; overflow: visible; }
`;
const Divider = styled.span`
  flex: none;
  width: 2px;
  height: 20px;
  margin: 0 3px;
  border-left: 1px solid #a5abb8;
  background: #fff;
`;
const Cap = styled.button<{ $chevron?: boolean }>`
  display: flex;
  flex-direction: column;
  align-items: center;
  justify-content: ${(p) => (p.$chevron ? "space-between" : "flex-end")};
  flex: none;
  align-self: stretch;
  width: 11px;
  margin-left: auto;
  padding: 5px 0 1px;
  border: 0;
  border-radius: 0 3px 3px 0;
  background: linear-gradient(#b9bdc7, #a3a7b1);
`;

const SelectBox = styled.div<{ $width: number }>`
  position: relative;
  flex: none;
  width: ${(p) => p.$width}px;
  height: 20px;
  margin: 1px 2px 0;
  background: #fff;
`;
const SelectArrow = styled.span`
  position: absolute;
  top: 1px;
  right: 1px;
  display: grid;
  place-items: center;
  width: 14px;
  height: 18px;
  background: linear-gradient(#e6e9f1, #ced3de);
  pointer-events: none;
`;
const Select = styled.select`
  appearance: none;
  display: block;
  width: 100%;
  height: 20px;
  padding: 0 16px 0 3px;
  border: 0;
  border-radius: 0;
  background: transparent;
  color: #000;
`;

const Workspace = styled.main`
  display: flex;
  flex: 1;
`;

const Dock = styled.aside`
  display: flex;
  flex-direction: column;
  flex: none;
  width: 200px;
  border: 1px solid #a0a4ad;
  border-top: 0;
  margin-bottom: 3px;
  background: #fff;
`;
const DockHeader = styled.div`
  display: flex;
  align-items: center;
  justify-content: space-between;
  height: 19px;
  padding: 0 4px 0 3px;
  background: #b5bcc9;
  color: #3c404a;
  white-space: nowrap;
`;
const CloseButton = styled.button`
  padding: 0;
  border: 0;
  background: none;
  line-height: 0;
`;
const Tree = styled.ul`
  flex: 1;
  margin: 0;
  padding: 2px 0 0;
  list-style: none;
  overflow: hidden;
`;
const TreeItem = styled.li<{ $child?: boolean }>`
  display: flex;
  align-items: center;
  height: 18px;
  padding-left: ${(p) => (p.$child ? 42 : 7)}px;
  white-space: nowrap;
  ${(p) => p.$child && css`
    background: repeating-linear-gradient(90deg, #888 0 1px, transparent 1px 2px) 30px 9px / 12px 1px no-repeat,
      repeating-linear-gradient(#888 0 1px, transparent 1px 2px) 30px 0 / 1px 18px no-repeat;
    &:last-child { background-size: 12px 1px, 1px 9px; }
  `}
`;
const Expander = styled.button`
  display: grid;
  place-items: center;
  width: 9px;
  height: 9px;
  margin-right: 7px;
  padding: 0;
  border: 1px solid #8e9199;
  background: #f4f4f4;
  line-height: 0;
`;
const Check = styled.input<{ $mixed?: boolean }>`
  appearance: none;
  flex: none;
  width: 12px;
  height: 12px;
  margin: 0;
  border: 1px solid #222;
  background: ${(p) => (p.$mixed ? "#bdbdbd" : "#fff")};
  &:checked {
    background-image: url("data:image/svg+xml,%3Csvg xmlns='http://www.w3.org/2000/svg' viewBox='0 0 10 10'%3E%3Cpath d='M1.500 5l2.500 2.500L8.500 2' fill='none' stroke='black' stroke-width='1.500'/%3E%3C/svg%3E");
    background-size: 10px 10px;
  }
`;
const LayerIcon = styled.svg`
  flex: none;
  margin: 0 4px 0 2px;
`;
const LayerLabel = styled.label<{ $selected?: boolean; $root?: boolean }>`
  flex: 1;
  line-height: 18px;
  padding-left: ${(p) => (p.$root ? 22 : 2)}px;
  color: ${(p) => (p.$selected ? "#e9f3ff" : "#000")};
  background: ${(p) => (p.$selected ? "#3399ff" : "none")};
`;
const ScrollBar = styled.div`
  display: flex;
  justify-content: space-between;
  height: 15px;
  background: #f0f0f0;
`;
const ScrollButton = styled.button`
  display: grid;
  place-items: center;
  width: 17px;
  padding: 0;
  border: 0;
  background: none;
`;
const ScrollThumb = styled.span`
  width: 131px;
  margin-right: auto;
  background: #cdcdcd;
`;

const Panes = styled.div`
  display: flex;
  flex-direction: column;
  flex: 1;
  min-width: 0;
  margin: 0 0 3px 4px;
  background: #f3f3f5;
`;
const MapPane = styled.section`
  display: flex;
  position: relative;
  height: 118px;
  margin: 0 2px 4px 0;
  border: solid #696b70;
  border-width: 2px 0 0 2px;
  background: #fff;
`;
const Legends = styled.div`
  display: flex;
  flex-direction: column;
  align-items: flex-start;
  gap: 2px;
  padding: 1px 0 0 1px;
`;
const Legend = styled.div<{ $height: number; $width: number }>`
  display: flex;
  align-items: center;
  width: ${(p) => p.$width}px;
  height: ${(p) => p.$height}px;
  border: solid #000;
  border-width: 1px 2px 2px 1px;
  font-family: ${SERIF};
  font-size: 15px;
  color: #000;
`;
const ScaleLegend = styled(Legend)`
  flex-direction: column;
  align-items: stretch;
  padding: 8px 0 0 16px;
`;
const LegendLabel = styled.span`
  width: 42px;
  margin-top: 12px;
  text-align: right;
`;
const LegendSwatch = styled.svg`
  margin-left: 12px;
`;
const ScaleRow = styled.div`
  display: flex;
  justify-content: space-between;
  margin: 10px 4px 0 0;
  line-height: 17px;
`;
const ScaleStop = styled.span<{ $first?: boolean }>`
  width: ${(p) => (p.$first ? 24 : 40)}px;
  margin-right: ${(p) => (p.$first ? 7 : 0)}px;
  text-align: right;
  white-space: nowrap;
`;
const Overview = styled.div`
  position: absolute;
  left: 632px;
  top: 0;
`;
const OverviewCanvas = styled.canvas`
  display: block;
`;
const OverviewLine = styled.svg`
  position: absolute;
  inset: 0;
`;

const ProfilePane = styled.section`
  display: flex;
  flex-direction: column;
  flex: 1;
  border: solid #6b6d72;
  border-width: 2px 0 0 1px;
  margin-right: 2px;
  background: #cfd3dc;
`;
const ProfileTools = styled.div`
  display: flex;
  height: 34px;
  padding-left: 2px;
`;
const Chart = styled.div`
  display: grid;
  flex: 1;
  position: relative;
  border: solid #636365;
  border-width: 2px 2px 1px 2px;
  margin-right: 1px;
  background: #808080;
  font-family: ${SERIF};
  font-size: 16px;
  color: #82ffff;
`;
const ChartSvg = styled.svg`
  grid-area: 1 / 1;
  width: 100%;
  height: 100%;
  min-height: 0;
`;
const ChartText = styled.div`
  grid-area: 1 / 1;
  z-index: 1;
  display: flex;
  flex-direction: column;
  align-items: center;
  line-height: 21px;
`;
const Positions = styled.div`
  display: flex;
  justify-content: space-between;
  align-self: stretch;
  padding-left: 1px;
`;
const Clearance = styled.p`
  margin: 0;
  font-size: 15px;
`;
const SubPathInfo = styled.p`
  margin: auto 0 33px 48px;
  padding: 0 8px;
  font-size: 15px;
  line-height: 19px;
  background: #fff;
  color: #dc0a0a;
`;
const Callout = styled.aside`
  position: absolute;
  z-index: 2;
  left: 70.3%;
  top: 18.2%;
  width: 195px;
  padding: 7px 20px 7px;
  border: 2px solid #bdbdb4;
  background: #ffffc8;
  box-shadow: 2px 2px 4px rgba(0, 0, 0, 0.45);
  color: #000;
  font-family: "Liberation Sans", sans-serif;
  font-size: 15px;
  font-weight: 700;
  line-height: 18px;
  text-align: center;
  p { margin: 0 -10px 10px; }
  p:last-child { margin: 0; }
`;

const StatusBar = styled.footer`
  display: flex;
  align-items: center;
  height: 18px;
  padding: 0 0 0 4px;
  background: linear-gradient(#d3d6de, #b0b4bf 45%, #a6aab5 50%, #bfc2ca);
  color: #22252b;
  white-space: nowrap;
`;
const StatusMessage = styled.span`
  flex: 1;
  font-family: ${UI_WIDE};
`;
const StatusCell = styled.span`
  padding: 0 2px 0 3px;
  border-left: 1px solid #80848e;
  box-shadow: inset 1px 0 #dfe2e8;
`;

const TaskBar = styled.footer`
  display: flex;
  align-items: stretch;
  height: 40px;
  background: #02130c;
  color: #fff;
`;
const TaskButton = styled.button<{ $open?: boolean; $active?: boolean; $width?: number }>`
  display: grid;
  place-items: center;
  width: ${(p) => p.$width ?? 49}px;
  padding: 0;
  border: 0;
  background: ${(p) =>
    p.$open || p.$active
      ? `linear-gradient(#76a9e8, #76a9e8) center bottom / ${p.$active ? 49 : 40}px 2px no-repeat ${p.$active ? "#33403b" : "transparent"}`
      : "none"};
  svg { display: block; overflow: visible; }
`;
const SearchBox = styled.label`
  display: flex;
  align-items: center;
  gap: 6px;
  width: 344px;
  padding: 0 14px 0 10px;
  background: #333433;
`;
const SearchInput = styled.input`
  flex: 1;
  min-width: 0;
  padding: 0;
  border: 0;
  background: none;
  font-size: 15px;
  outline: 0;
  &::placeholder { color: #9a9b9a; opacity: 1; }
`;
const Tray = styled.div`
  display: flex;
  align-items: center;
  margin-left: auto;
  padding-right: 17px;
`;
const Clock = styled.time`
  width: 64px;
  margin-right: 10px;
  text-align: center;
  line-height: 18px;
`;

/* ---------- small components ---------- */

const Glyph = ({ name }: { name: string }) => (
  <svg width="20" height="20" viewBox="0 0 20 20" aria-hidden="true">{icons[name]}</svg>
);

const DownMark = () => (
  <svg width="8" height="8" viewBox="0 0 8 8"><path d="M1 1h6" stroke="#fff" strokeWidth="1.5" /><path d="M1 3.500h6L4 7z" fill="#fff" stroke="#666b76" strokeWidth=".7" /></svg>
);

const CapButton = ({ chevron }: { chevron?: boolean }) => (
  <Cap $chevron={chevron} aria-label="Toolbar options">
    {chevron && <svg width="7" height="6" viewBox="0 0 7 6"><path d="M0 1l2 2-2 2M4 1l2 2-2 2" fill="none" stroke="#fff" strokeWidth="1.3" /></svg>}
    <DownMark />
  </Cap>
);

const Combo = ({ label, value, width }: { label: string; value: string; width: number }) => (
  <SelectBox $width={width}>
    <Select aria-label={label} defaultValue={value}><option>{value}</option></Select>
    <SelectArrow><svg width="6" height="4" viewBox="0 0 6 4"><path d="M0 0h6L3 4z" fill="#737986" /></svg></SelectArrow>
  </SelectBox>
);

type BarProps = { tools: string; active?: string[]; width?: number; cap?: "plain" | "chevron"; lead?: ReactNode };
const ToolBar = ({ tools, active = [], width, cap, lead }: BarProps) => (
  <Bar $width={width} role="toolbar">
    {lead}
    {tools.split(" ").filter(Boolean).map((t, i) =>
      t === "|" ? <Divider key={i} /> : <Tool key={i} $active={active.includes(t)} aria-label={t}><Glyph name={t} /></Tool>
    )}
    {cap && <CapButton chevron={cap === "chevron"} />}
  </Bar>
);

/* ---------- overview raster ---------- */

const coast: [number, number][] = [[0, 84], [20, 90], [45, 93], [62, 98], [72, 106], [80, 101], [95, 98], [112, 101], [128, 106], [133, 100], [140, 97]];
const hotspots: [number, number, number, number][] = [
  [16, 67, 6, 0.3], [33, 67, 5, 0.32], [108, 62, 5, 0.35], [133, 37, 5, 0.35], [126, 80, 5, 0.4], [111, 81, 4, 0.35],
  [54, 48, 6, 0.15], [48, 6, 8, 0.12], [80, 8, 14, 0.1], [20, 16, 14, 0.08],
];

const rand = (x: number, y: number) => {
  const s = Math.sin(x * 127.1 + y * 311.7) * 43758.5453;
  return s - Math.floor(s);
};
const smooth = (x: number, y: number, size: number) => {
  const gx = x / size, gy = y / size;
  const ix = Math.floor(gx), iy = Math.floor(gy);
  const fx = gx - ix, fy = gy - iy;
  const top = rand(ix, iy) * (1 - fx) + rand(ix + 1, iy) * fx;
  const low = rand(ix, iy + 1) * (1 - fx) + rand(ix + 1, iy + 1) * fx;
  return top * (1 - fy) + low * fy;
};
const coastAt = (x: number) => {
  for (let i = 1; i < coast.length; i++) {
    const [x0, y0] = coast[i - 1], [x1, y1] = coast[i];
    if (x <= x1) return y0 + ((y1 - y0) * (x - x0)) / (x1 - x0);
  }
  return 97;
};
const ramp: [number, number, number, number][] = [
  [0, 0, 0, 120], [0.12, 0, 50, 200], [0.22, 0, 130, 200], [0.34, 0, 180, 170], [0.42, 0, 150, 60], [0.52, 10, 145, 0],
  [0.66, 80, 165, 0], [0.78, 150, 165, 0], [0.9, 185, 125, 0], [1, 190, 70, 0],
];
const colourAt = (v: number) => {
  const t = Math.max(0, Math.min(1, v));
  for (let i = 1; i < ramp.length; i++) {
    const a = ramp[i - 1], b = ramp[i];
    if (t <= b[0]) {
      const k = (t - a[0]) / (b[0] - a[0]);
      return [a[1] + (b[1] - a[1]) * k, a[2] + (b[2] - a[2]) * k, a[3] + (b[3] - a[3]) * k];
    }
  }
  return [190, 70, 0];
};
const bump = (x: number, y: number, cx: number, cy: number, rx: number, ry: number) =>
  Math.exp(-(((x - cx) / rx) ** 2) - ((y - cy) / ry) ** 2);

const OverviewMap = () => {
  const ref = useRef<HTMLCanvasElement>(null);
  useEffect(() => {
    const ctx = ref.current?.getContext("2d");
    if (!ctx) return;
    const w = 140, h = 115;
    const img = ctx.createImageData(w, h);
    for (let y = 0; y < h; y++) {
      for (let x = 0; x < w; x++) {
        const edge = coastAt(x) - y;
        const creek = (Math.abs(x - (20 - (y - 94) * 0.3)) < 1.5 && y > 88 && y < 107) ||
          (Math.abs(x - 73) < 1.2 && y > 100) || (Math.abs(x - 131) < 1.2 && y > 98 && y < 114);
        if (edge < 0 && !creek) continue;
        let v = 0.8 - y * 0.0024 + (smooth(x, y, 12) - 0.5) * 0.16 + (rand(x, y) - 0.5) * 0.3;
        v -= 0.26 * bump(x, y, 84, 80, 14, 18) + 0.24 * bump(x, y, 95, 55, 7, 26) + 0.3 * bump(x, y, 5, 54, 10, 12);
        v -= 0.08 * bump(x, y, 40, 76, 30, 10) + 0.2 * bump(x, y, 125, 93, 22, 6);
        hotspots.forEach(([cx, cy, r, k]) => { v += k * bump(x, y, cx, cy, r, r); });
        if (edge < 10) v = v * (0.5 + edge / 20);
        if (edge < 5) v = 0.02 + edge * 0.02;
        if (creek) v = 0.03;
        const [r, g, b] = colourAt(v);
        const o = (y * w + x) * 4;
        img.data[o] = r; img.data[o + 1] = g; img.data[o + 2] = b; img.data[o + 3] = 255;
      }
    }
    ctx.putImageData(img, 0, 0);
  }, []);
  return (
    <Overview>
      <OverviewCanvas ref={ref} width={140} height={115} />
      <OverviewLine width="140" height="115" viewBox="0 0 140 115">
        <path d="M43 39L67 111" stroke="#ffff00" strokeWidth="5" strokeLinecap="round" />
        <path d="M43 39L67 111" stroke="#000" strokeWidth="1.5" />
        <path d="M46 63l14 14M60 63L46 77" stroke="#fff" strokeWidth="4" strokeDasharray="6 8" />
        <path d="M46 63l14 14M60 63L46 77" stroke="#d01818" strokeWidth="2" strokeDasharray="6 3 2 3" />
      </OverviewLine>
    </Overview>
  );
};

/* ---------- terrain profile ---------- */

const terrain =
  "252,508 255,533 257,567 273,570 276,557 279,533 282,532 293,535 297,567 299,573 304,574 306.7,563 308,569 309,560 310.7,569 313,543 317,552 320.7,436 325,532 329,463 331.7,540 333,550 335,551 338,533 342.7,427 346.7,504 350.7,428 352,433 354,432 355.7,458 358.3,430 360,477 363,567 364.5,571 366.5,583 369.7,558 372.3,584 377.7,545 380.7,585 386,497 389.7,455 392,457 393.7,507 396.3,537 398.5,508 400.5,508 402.5,538 405,533 408,490 411.7,437 413.5,435.5 416.7,490 421.3,541 425.3,507 430,468 432.3,516 434.3,513 436,489 437.7,497 440,475 443.3,449 447,490 449,486 452.3,506 454,477 456.7,543 460.3,583 464.3,505 466.7,573 469,598.5 473,544 475.3,599 489,601 505,604 524,607.5 528,585 530,608.5 536.3,610.5 539,533 542.3,477 545.3,552 547.7,460 550,476 552.7,453 559,461.5 562.7,455 565,536 566.3,536 568.3,455.5 572,468 575.7,473 578,540 581.7,620 607,622.5 640,629 683,638 743,650 776,659.5 794,664 796,658 800,664 806,666 850,670 886,672.5 903,666 920,648 930,639 936.3,624 939.7,659.5 942.5,681 949.5,681 955.8,608 960,607.5 980,611.7 991,612 1005,616.5 1020.5,618.3 1024,634 1031,655 1039,652.5 1048,654.5 1065,669 1071,698 1075,712.3 1083,712.3 1090.6,702.7 1100,722.3 1110.7,723.3 1125,732.7 1133,737.3 1150,735.3 1153,732.5 1158,732.5 1168,739.3 1192,742 1237,742.7 1253,747.7 1277,751 1310.7,753.3 1328.6,758 1353,762.7 1368.8,763.7 1406.7,768.7 1416.5,772.3 1590,772.3";

const elevations: [string, number][] = [["20 m", 459.5], ["15 m", 538.5], ["10 m", 616.5], ["5 m", 694.5], ["0 m", 773.5]];
const distances: [string, number][] = [["", 252.5], ["25 m", 454.5], ["50 m", 656.5], ["75 m", 858.5], ["100 m", 1060.5], ["125 m", 1262.5], ["150 m", 1463.5], ["", 1589.5]];

const Profile = () => (
  <ChartSvg viewBox="207 352 1388 485" fontFamily={SERIF} fontSize="15" fill="#82ffff">
    <defs>
      <filter id="arrowShadow" x="-10%" y="-30%" width="120%" height="170%">
        <feDropShadow dx="2" dy="3" stdDeviation="2" floodColor="#000" floodOpacity=".5" />
      </filter>
    </defs>
    <polygon points={`252,807 ${terrain} 1590,807`} fill="#00c800" />
    {elevations.map(([text, y]) => (
      <g key={text}>
        <path d={`M253 ${y}H1590`} stroke="#82f5e8" strokeDasharray="9 6 3 6" />
        <text x="245" y={y + 5} textAnchor="end">{text}</text>
      </g>
    ))}
    <polyline points={`252.5,807 ${terrain} 1589.5,807`} fill="none" stroke="#82ffff" strokeWidth="1" />
    <path d="M252 807.5H1590" stroke="#82ffff" />
    {distances.map(([text, x]) => (
      <g key={x}>
        <path d={`M${x} 807v7`} stroke="#82ffff" />
        <text x={x} y="830" textAnchor="middle">{text}</text>
      </g>
    ))}
    <text x="1589" y="830" textAnchor="end">166 m</text>
    <path d="M252.5 438V508M1589.5 748V773" stroke="#000" strokeWidth="3" strokeDasharray="9 4" />
    <path d="M252 437.5L1590 744.5" stroke="#ffff1e" strokeWidth="3.2" />
    <path d="M252 437.5L1590 744.5" stroke="#000" strokeWidth="1.1" />
    <path d="M553 450V505" stroke="#ff0000" strokeWidth="1.3" />
    <circle cx="552.5" cy="450.5" r="4" fill="#ff0000" />
    <circle cx="552.5" cy="505.5" r="4" fill="#ff0000" />
    <path d="M771.5 452L816 466.5" stroke="#e01010" strokeWidth="2" />
    <g fill="#e01010" fontSize="16">
      <text x="819" y="433">Location: 1057011.56, 2707743.28</text>
      <text x="819" y="452">Elev: 18.875 m, Dist: 70.331 m</text>
    </g>
    <g filter="url(#arrowShadow)" fill="#c9c9c9">
      <path d="M1183 445L606 505M1184 521L1040 604" stroke="#c9c9c9" strokeWidth="2.5" />
      <path d="M585 507.5L609 498.5L607 505L612 510.5Z" />
      <path d="M1022 614L1038 596.5L1041 603.5L1048 607.5Z" />
    </g>
  </ChartSvg>
);

/* ---------- taskbar pictures, on a 24 x 24 grid ---------- */

const Task = ({ children }: { children: ReactNode }) => <svg width="24" height="24" viewBox="0 0 24 24" aria-hidden="true">{children}</svg>;

const taskApps: { name: string; open?: boolean; active?: boolean; art: ReactNode }[] = [
  { name: "Edge", art: <path d="M2 11Q4 1 13 1q8 1 9 12H8q0 7 13 4v4Q13 25 7 21 2 16 5 10q3-4 7-4-4 1-4 4h8q-.5-5-5-5-6 0-9 6z" fill="#1e86e0" /> },
  { name: "File Explorer", open: true, art: <g><path d="M1 1h8l2 3h12v18H1z" fill="#f7cf62" /><path d="M1 6h22v16H1z" fill="#fde79a" /><path d="M5 13h14v10h-4v-5H9v5H5z" fill="#4ba7dc" /></g> },
  { name: "Remote Desktop", art: <g><path d="M2 2l15-1 2 14-14 2z" fill="#2447c8" stroke="#ccd7e8" strokeWidth="1.5" /><path d="M5 5l10-1 1 5-9 3z" fill="#6f9af0" /><path d="M7 18l8-1 2 4-9 1z" fill="#c6cbd4" /><circle cx="18" cy="18.500" r="4.500" fill="#dfe3e8" /><path d="M16 17l2 2-2 2M20 16l-2 2 2 2" fill="none" stroke="#3a9a4a" /></g> },
  { name: "Apps", art: <g><path d="M1 1h22v22H1z" fill="#f4f4f4" />{["#e2574c", "#e2574c", "#c93a80", "#51ad55", "#efb52f", "#e2574c", "#51ad55", "#3b9fe0", "#3b6fe0"].map((c, i) => <path key={i} d={`M${5 + (i % 3) * 5} ${5 + Math.floor(i / 3) * 5}h3.500v3.500h-3.500z`} fill={c} />)}</g> },
  { name: "Chrome", open: true, art: <g><circle cx="12" cy="12" r="11" fill="#e4463a" /><path d="M12 12L2.500 6.500A11 11 0 0011 23z" fill="#34a353" /><path d="M12 12l-1 11a11 11 0 0011.500-15H12z" fill="#fbcb2f" /><circle cx="12" cy="12" r="5.200" fill="#fff" /><circle cx="12" cy="12" r="4.100" fill="#4a86e8" /></g> },
  { name: "Firefox", art: <g><circle cx="12" cy="12" r="11" fill="#e66a19" /><circle cx="11" cy="9.500" r="7.500" fill="#2467b5" /><path d="M1 10q2-5 5-6-1 3 3 4 3 0 1 3-5 1-2 5 5 4 9 0 5-4 3-11 4 5 3 10-3 8-11 8Q2 21 1 10z" fill="#f39322" /></g> },
  { name: "Google Earth", art: <g><circle cx="12" cy="12" r="11" fill="#4a7dc9" /><path d="M2 8q7-3 10 4t10 6M4 4q8-2 11 5t8 5M2 14q6-1 8 4t5 4" stroke="#eef3fb" strokeWidth="2.400" fill="none" /></g> },
  { name: "Google Earth Pro", art: <g><circle cx="12" cy="12" r="10.500" fill="#8c8f93" /><path d="M3 7q7-3 10 3t9 5M6 3q7-1 9 5t7 4" stroke="#e8eaec" strokeWidth="2" fill="none" /><text x="12" y="22" textAnchor="middle" fontFamily="Liberation Sans" fontWeight="700" fontSize="6" fill="#222">PRO</text></g> },
  { name: "Store", art: <g><path d="M2 7h20l-1 16-18-1z" fill="#fff" /><path d="M7 8V4q1-3 5-3t5 3v4" fill="none" stroke="#fff" strokeWidth="1.5" /><path d="M7 12l4-.6V15H7zM12 11.300l5-.8V15h-5zM7 16h4v3.500L7 19zM12 16h5v4.400l-5-.8z" fill="#02130c" /></g> },
  { name: "PC", art: <g><path d="M.5.5h23v23H.5z" fill="#1a5e9c" stroke="#dbe8f2" /><text x="2" y="13" fontFamily="Liberation Sans" fontWeight="700" fontStyle="italic" fontSize="15" fill="#fff">P</text><text x="11" y="21" fontFamily="Liberation Sans" fontWeight="700" fontStyle="italic" fontSize="15" fill="#fff">C</text></g> },
  { name: "Compass", art: <g><circle cx="12" cy="12" r="10.500" fill="#d9d2c8" stroke="#a39d94" strokeWidth="1.5" /><circle cx="12" cy="12" r="8" fill="#efebe6" /><path d="M8 5l6 13 2 1-5-14z" fill="#c4302b" /><path d="M6 10l3 8" stroke="#888" /></g> },
  { name: "SketchUp", art: <g><path d="M2 6l6-4 13-1 1 14-9 8-9-3z" fill="#d72b2b" /><path d="M6 7l13-3M7 12l11-3v4l-9 3M9 16v4l6-2v-4" fill="none" stroke="#fff" strokeWidth="1.8" /></g> },
  { name: "Viewer", open: true, art: <g><path d="M1 1h22v22H1z" fill="#e2622f" /><path d="M12 1l3 5 6-2-2 6 4 2-4 3 2 6-6-2-3 4-3-4-6 2 2-6-4-3 4-2-2-6 6 2z" fill="#f6c49b" /><ellipse cx="12" cy="12" rx="7" ry="4.500" fill="#fff" /><circle cx="12" cy="12" r="3.500" fill="#2a5aa8" /><circle cx="12" cy="12" r="1.500" fill="#111" /></g> },
  { name: "Internet Explorer", art: <g><path d="M3 13Q3 4 12 3q9 0 10 11H9q1 6 7 4h5q-3 5-9 5-9-1-9-10zM9 10h7q-.5-3-3.500-3T9 10z" fill="#4cb5f0" fillRule="evenodd" /><path d="M1 22Q-1 16 8 8 18 0 23 2q2 3-3 8 3-5 1-6Q16 3 8 11 2 18 4 20q2 1 5-1-6 5-8 3z" fill="#f6c63c" /></g> },
  { name: "Mapper Tools", art: <g><path d="M2 1h20v4H2z" fill="#d9203c" /><path d="M6 1h3v5H6zM15 1h3v5h-3z" fill="#02130c" /><path d="M2 5h20v6L12 22 2 11z" fill="#3a1fc0" /><path d="M2 14l10 8 10-8" fill="none" stroke="#f2d230" strokeWidth="1.5" /><path d="M12 3l6 9-6 7-6-7z" fill="#d9203c" /><path d="M8 13q4-3 8 0M9 10q3-2 6 0" fill="none" stroke="#f7e36a" /></g> },
  { name: "QT Modeler", art: <g><path d="M1 1h22v22H1z" fill="#9e4fb5" stroke="#cfa4dc" /><text x="12" y="13" textAnchor="middle" fontFamily="Liberation Sans" fontSize="12" fontWeight="700" fill="#fff">QT</text><text x="12" y="20" textAnchor="middle" fontFamily="Liberation Sans" fontSize="5" fill="#fff">Modeler</text></g> },
  { name: "Global Mapper", active: true, art: <g><path d="M13 1Q2 2 2 11q1 8 10 8 8-1 8-6-3 2-7 1-5-2-4-7 1-4 4-6z" fill="#98a843" /><path d="M1 13q1 9 11 10 9-1 11-11-4 9-12 8-6-1-10-7z" fill="#1f5560" /></g> },
];

const AppLogo = () => (
  <svg width="16" height="16" viewBox="0 0 24 24" aria-hidden="true">
    <path d="M9 0Q1 4 1 13q0 6 6 8-3-5 2-8 2 5 9 4 5-2 5-7-3 3-8 2Q8 8 9 0z" fill="#8da646" />
    <path d="M0 12q1 11 12 12 9-1 12-10-5 6-12 5Q4 18 0 12z" fill="#1c4a55" />
  </svg>
);

const gridLayerIcon = (
  <g><path d="M1 1h12v12H1z" fill="#fbf7c8" stroke="#8fd02c" strokeWidth="2" /><path d="M2 11V8l2-3 2 3 2-2 2 1 2-2v6z" fill="#b23a22" /><path d="M2 12v-2l3-1 3 1 4-1v3z" fill="#7dbb2c" /></g>
);
const pointsLayerIcon = (
  <g><path d="M1 1h12v12H1z" fill="#fff" stroke="#8fd02c" strokeWidth="2" />{[[4, 4], [9, 3], [6, 7], [10, 7], [4, 10], [8, 10], [11, 11]].map(([x, y]) => <path key={`${x}-${y}`} d={`M${x - 1} ${y - 1}h2v2h-2z`} fill="#223" />)}</g>
);
const layers = [
  { id: "laz", text: "2014-color.laz [727,807", checked: false, selected: true, icon: pointsLayerIcon },
  { id: "grid1", text: "Elevation Grid 1", checked: false, selected: false, icon: gridLayerIcon },
  { id: "grid2", text: "Elevation Grid 2", checked: true, selected: false, icon: gridLayerIcon },
];

/* ---------- page ---------- */

export default function App() {
  return (
    <Page>
      <GlobalStyle />
      <TitleBar>
        <AppLogo />
        <Title>Global Mapper v18.1 (b022117) [64-bit] [+Lidar] - REGISTERED</Title>
        <WindowButton aria-label="Minimize"><svg width="11" height="11"><path d="M0 5.500h10" stroke="#000" /></svg></WindowButton>
        <WindowButton aria-label="Restore"><svg width="11" height="11"><path d="M.5 2.500h8v8h-8zM2.500 2.500v-2h8v8h-2" fill="none" stroke="#000" /></svg></WindowButton>
        <WindowButton aria-label="Close"><svg width="11" height="11"><path d="M.5.5l10 10M10.500.5l-10 10" stroke="#000" /></svg></WindowButton>
      </TitleBar>
      <MenuBar>
        {["File", "Edit", "View", "Tools", "Analysis", "Layer", "Search", "GPS", "Help"].map((m) => <MenuItem key={m}>{m}</MenuItem>)}
      </MenuBar>
      <ToolbarRows>
        <ToolbarRow>
          <ToolBar width={203} cap="plain" tools="folder globe save layout wrench layers" active={["layers"]} />
          <ToolBar width={203} cap="plain" tools="zoomTool hand zoomIn zoomOut back home" />
          <ToolBar width={113} cap="plain" tools="pencil selectShape deleteShape" />
          <ToolBar width={113} cap="plain" tools="measure info searchDoc" />
          <ToolBar width={293} cap="plain" tools="shaderHill contourHill cutHill lineOfSight viewShed watershed compareTerrain heatmap plane" active={["lineOfSight"]} />
        </ToolbarRow>
        <ToolbarRow>
          <ToolBar width={432} cap="chevron" tools="panes flyThrough clipPane cube3d toggle3d waterUp waterDown waterTop peaks" active={["toggle3d", "peaks"]} />
          <ToolBar width={353} cap="chevron" tools="" lead={<Combo label="Favorites" value="Set up Favorites Shortcut Keys..." width={320} />} />
          <ToolBar width={203} cap="plain" tools="points polyline freehand polygon rect circle" />
        </ToolbarRow>
        <ToolbarRow>
          <ToolBar width={241} cap="plain" tools="cogoAngle target gridPencil linePencil mapPencil | checkPencil editTool" />
          <ToolBar width={421} cap="plain" tools="moveShape scaleShape vertices moveVertex addVertex | joinLine scissors dotsToShape copyShape pasteShape alignShapes crop buffer" />
          <ToolBar width={441} cap="chevron" tools="lidarPoints lidarGround lidarBuild lidarExtract lidarTriangle | filter" lead={<Combo label="Lidar draw mode" value="Color Lidar by Elevation" width={213} />} />
        </ToolbarRow>
        <ToolbarRow>
          <ToolBar width={293} cap="plain" tools="mountain grass bush tree building powerline water noise key" />
          <ToolBar width={160} tools="bridgeTool bridgeId redSquare greenSquare undo" />
          <ToolBar width={160} tools="hierarchy folderDoc storm gauge help" />
          <ToolBar width={41} tools="mapPin" />
        </ToolbarRow>
      </ToolbarRows>

      <Workspace>
        <Dock>
          <DockHeader>
            Control Center (3 Layers, 1 Selec...
            <CloseButton aria-label="Close panel"><svg width="9" height="9"><path d="M1 1l7 7M8 1L1 8" stroke="#555" /></svg></CloseButton>
          </DockHeader>
          <Tree>
            <TreeItem>
              <Expander aria-label="Collapse"><svg width="5" height="1"><path d="M0 .5h5" stroke="#34508c" /></svg></Expander>
              <Check type="checkbox" id="root-layer" defaultChecked $mixed />
              <LayerLabel htmlFor="root-layer" $root>Current Workspace</LayerLabel>
            </TreeItem>
            {layers.map((l) => (
              <TreeItem key={l.id} $child>
                <Check type="checkbox" id={l.id} defaultChecked={l.checked} />
                <LayerIcon width="14" height="14" viewBox="0 0 14 14">{l.icon}</LayerIcon>
                <LayerLabel htmlFor={l.id} $selected={l.selected}>{l.text}</LayerLabel>
              </TreeItem>
            ))}
          </Tree>
          <ScrollBar>
            <ScrollButton aria-label="Scroll left"><svg width="6" height="9"><path d="M5 1L1.500 4.500L5 8" fill="none" stroke="#333" strokeWidth="1.5" /></svg></ScrollButton>
            <ScrollThumb />
            <ScrollButton aria-label="Scroll right"><svg width="6" height="9"><path d="M1 1l3.500 3.500L1 8" fill="none" stroke="#333" strokeWidth="1.5" /></svg></ScrollButton>
          </ScrollBar>
        </Dock>

        <Panes>
          <MapPane>
            <Legends>
              <Legend $width={113} $height={48}>
                <LegendLabel>0 m</LegendLabel>
                <LegendSwatch width="49" height="13" viewBox="0 0 49 13">
                  <defs>
                    <linearGradient id="ramp" x1="0" y1="0" x2="0" y2="1">
                      <stop offset="0" stopColor="#ff3c00" /><stop offset=".5" stopColor="#ffd800" /><stop offset="1" stopColor="#00e050" />
                    </linearGradient>
                  </defs>
                  <path d="M0 .5h13M0 3.500h13M0 6.500h13M0 9.500h13M0 12h13" stroke="#000" strokeWidth="1.5" />
                  <path d="M12.500.5h35.500v11.500h-35.500z" fill="url(#ramp)" stroke="#000" />
                </LegendSwatch>
              </Legend>
              <ScaleLegend $width={400} $height={63}>
                <svg width="360" height="20" viewBox="0 0 360 20">
                  <path d="M11 10H356M12 0V20M69 0V20M126 0V20M184 0V20M241 0V20M298 0V20M356 0V20" stroke="#000" strokeWidth="2" />
                </svg>
                <ScaleRow>
                  {["0 m", "250 m", "500 m", "750 m"].map((t, i) => <ScaleStop key={t} $first={i === 0}>{t}</ScaleStop>)}
                </ScaleRow>
              </ScaleLegend>
            </Legends>
            <OverviewMap />
          </MapPane>

          <ProfilePane>
            <ProfileTools>
              <ToolBar width={511} tools="measurePath cutFill panes wrench | profile profilePrev profileNext" lead={<Combo label="Profile click mode" value="Click to Measure SubPath on Profile" width={278} />} />
            </ProfileTools>
            <Chart>
              <Profile />
              <ChartText>
                <Positions>
                  <span>From Pos: 1056936.03, 2707961.31</span>
                  <span>To Pos: 1057113.82, 2707448.09</span>
                </Positions>
                <Clearance>Minimum Clearance: -3.5 m at 1056976.01, 2707845.93</Clearance>
                <SubPathInfo>SUB-PATH INFO ==&gt; Dist: 5.448 m, 3D Dist: 5.525 m, Elev Diff: -0.917 m, Slope: -9.56° [16.84%]</SubPathInfo>
              </ChartText>
              <Callout>
                <p>Trees to be Removed</p>
                <p>Clearence over a<br />Building</p>
              </Callout>
            </Chart>
          </ProfilePane>
        </Panes>
      </Workspace>

      <StatusBar>
        <StatusMessage>Left click to start adding points. --&gt; Height = 2.308 us-ft (Elevation Grid 2)</StatusMessage>
        <StatusCell>1:8239</StatusCell>
        <StatusCell>SPCS ( NAD83_NSRS ) ( 1056503.58, 2706210.85 )</StatusCell>
        <StatusCell>41° 39' 52.2279" N, 70° 02' 05.3029" W</StatusCell>
      </StatusBar>

      <TaskBar>
        <TaskButton $width={48} aria-label="Start">
          <svg width="17" height="17" viewBox="0 0 17 17"><path d="M0 2.500l7-1V8H0zM8 1.300L17 0v8H8zM0 9h7v6.500l-7-1zM8 9h9v8l-9-1.300z" fill="#fff" /></svg>
        </TaskButton>
        <SearchBox>
          <svg width="20" height="20" viewBox="0 0 20 20"><circle cx="10" cy="10" r="8.500" fill="none" stroke="#fff" strokeWidth="2.5" /></svg>
          <SearchInput placeholder="Ask me anything" aria-label="Search" />
          <svg width="14" height="18" viewBox="0 0 14 18"><path d="M4.500 1h5v9.500h-5zM1.500 8v5.500h11V8M7 13.500V17M4 17h6" fill="none" stroke="#aaa" strokeWidth="1.2" /></svg>
        </SearchBox>
        <TaskButton $width={49} aria-label="Task view">
          <svg width="20" height="16" viewBox="0 0 20 16"><path d="M5 1.500h10v13H5zM3 3.500H1v9h2M17 3.500h2v9h-2" fill="none" stroke="#fff" strokeWidth="1.3" /></svg>
        </TaskButton>
        {taskApps.map((a) => (
          <TaskButton key={a.name} $open={a.open} $active={a.active} aria-label={a.name}><Task>{a.art}</Task></TaskButton>
        ))}
        <Tray>
          <TaskButton $width={24} aria-label="Hidden icons"><svg width="12" height="8"><path d="M1 7l5-5 5 5" fill="none" stroke="#fff" strokeWidth="1.3" /></svg></TaskButton>
          <TaskButton $width={26} aria-label="Battery"><svg width="17" height="14" viewBox="0 0 17 14"><path d="M4 3.500h12v8H6" fill="none" stroke="#fff" strokeWidth="1.3" /><path d="M8 5h6v5H8z" fill="#fff" /><path d="M1 4h5v3q-1 3-4 1zM2 1v3M5 1v3M3.500 9v4" fill="#fff" stroke="#fff" /></svg></TaskButton>
          <TaskButton $width={28} aria-label="Pen"><svg width="16" height="17" viewBox="0 0 16 17"><path d="M5 12L12 1q3-1 3 1L8 13l-3 1zM1 13q3-6 5-4M2 16q9 1 12-7" fill="none" stroke="#fff" strokeWidth="1.2" /></svg></TaskButton>
          <TaskButton $width={34} aria-label="Keyboard"><svg width="23" height="14" viewBox="0 0 23 14"><path d="M.7.7h21.600v12.600H.7z" fill="none" stroke="#fff" strokeWidth="1.2" /><path d="M3 4h17M3 7h17" stroke="#fff" strokeWidth="1.4" strokeDasharray="1.500 1.500" /><path d="M6 10.500h11" stroke="#fff" strokeWidth="1.4" /></svg></TaskButton>
          <Clock>10:17 PM<br />3/31/2017</Clock>
          <TaskButton $width={26} aria-label="Notifications">
            <svg width="26" height="26" viewBox="0 0 26 26"><path d="M2 3h15v13h-8l-3 3v-3H2z" fill="#fff" /><path d="M4.500 6.500h10M4.500 9.500h10M4.500 12.500h6" stroke="#02130c" strokeWidth="1.3" /><circle cx="17" cy="18" r="7.500" fill="#2c3431" stroke="#8b908e" /><text x="17" y="22" textAnchor="middle" fontFamily="Open Sans" fontSize="12" fill="#fff">1</text></svg>
          </TaskButton>
        </Tray>
      </TaskBar>
    </Page>
  );
}
